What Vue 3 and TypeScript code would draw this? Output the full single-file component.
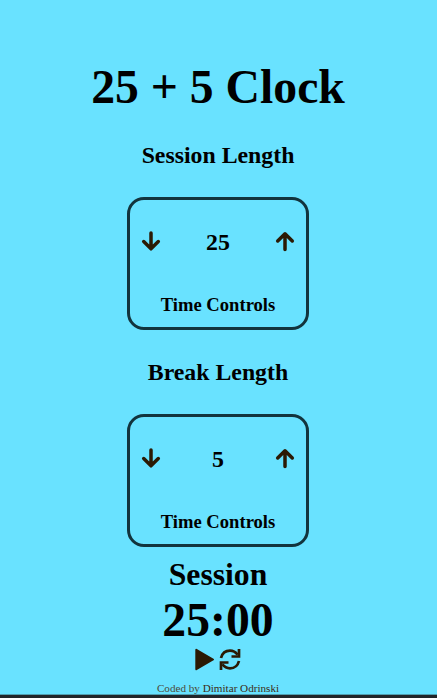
<script setup lang="ts">
import { ref } from 'vue'

interface Control {
  id: string
  title: string
  value: number
}

const controls = ref<Control[]>([
  { id: 'session', title: 'Session Length', value: 25 },
  { id: 'break', title: 'Break Length', value: 5 },
])

function change(control: Control, delta: number) {
  control.value = Math.min(60, Math.max(1, control.value + delta))
}
</script>

<template>
  <main class="clock">
    <h1 class="heading">25 + 5 Clock</h1>
    <section v-for="c in controls" :key="c.id" class="group">
      <h2 class="title">{{ c.title }}</h2>
      <div class="box">
        <div class="row">
          <button class="btn" :aria-label="'Decrease ' + c.id" @click="change(c, -1)">
            <svg class="arrow" viewBox="0 0 20 24"><path d="M10 3V18.500M2.700 11.600L10 18.800L17.300 11.600" /></svg>
          </button>
          <span class="value">{{ c.value }}</span>
          <button class="btn" :aria-label="'Increase ' + c.id" @click="change(c, 1)">
            <svg class="arrow" viewBox="0 0 20 24"><path d="M10 19.500V4M2.700 11L10 3.800L17.300 11" /></svg>
          </button>
        </div>
        <h3 class="caption">Time Controls</h3>
      </div>
    </section>
    <div class="phase">Session</div>
    <div class="time">25:00</div>
    <div class="actions">
      <button class="btn" aria-label="Start">
        <svg class="play" viewBox="0 0 20 24"><path d="M1.300 2.800L18 12.500L1.300 22.200Z" /></svg>
      </button>
      <button class="btn" aria-label="Reset">
        <svg class="sync" viewBox="0 0 24 24">
          <path class="arc" d="M3 11C4.200 6.500 7.700 3.700 12 3.700C15.300 3.700 17.700 5.200 19.600 7.700M21 14C19.800 18.500 16.300 21.300 12 21.300C8.700 21.300 6.300 19.800 4.400 17.300" />
          <path class="arc" d="M21 2V9.500H13.500M3 23V15.500H10.500" />
        </svg>
      </button>
    </div>
    <footer class="credit">Coded by <span class="author">Dimitar Odrinski</span></footer>
  </main>
</template>

<style>
body {
  background: #69e2ff;
}
</style>

<style scoped>
.clock {
  box-sizing: border-box;
  height: 698px;
  padding: 59px 1px 0 0;
  border-bottom: 3px solid #212529;
  box-shadow: inset 0 -1px 0 #4f9fb1;
  overflow: hidden;
  display: flex;
  flex-direction: column;
  align-items: center;
  font-family: "Liberation Serif", "Times New Roman", serif;
  font-weight: bold;
  color: #000;
}
.heading {
  margin: 0 0 28px;
  font-size: 47.700px;
  line-height: 55px;
}
.group {
  display: flex;
  flex-direction: column;
  align-items: center;
  height: 217px;
}
.title {
  margin: 0;
  font-size: 23.800px;
  line-height: 27px;
}
.box {
  box-sizing: border-box;
  width: 182px;
  height: 133px;
  margin-top: 28px;
  padding: 28px 11px 0;
  border: 3px solid #12343d;
  border-radius: 17px;
}
.row {
  display: flex;
  align-items: center;
  justify-content: space-between;
  height: 28px;
}
.value {
  font-size: 23.800px;
}
.caption {
  margin: 38px 0 0;
  font-size: 18.600px;
  line-height: 21px;
  text-align: center;
}
.btn {
  display: block;
  margin: 0;
  padding: 0;
  border: 0;
  background: none;
  color: #2b1a04;
}
.btn svg {
  display: block;
  fill: currentColor;
}
.btn .arrow {
  width: 20px;
  height: 24px;
  fill: none;
  stroke: currentColor;
  stroke-width: 3.500;
  stroke-linecap: round;
  stroke-linejoin: round;
}
.phase {
  margin-top: -19px;
  font-size: 31.700px;
  line-height: 36px;
}
.time {
  margin-top: -1px;
  font-size: 47.700px;
  line-height: 55px;
}
.actions {
  display: flex;
  gap: 3px;
}
.play {
  width: 20px;
  height: 24px;
  stroke: currentColor;
  stroke-width: 2;
  stroke-linejoin: round;
}
.sync {
  width: 24px;
  height: 24px;
}
.sync .arc {
  fill: none;
  stroke: currentColor;
  stroke-width: 2.700;
}
.credit {
  margin-top: 10px;
  font-size: 11.150px;
  line-height: 14px;
  font-weight: normal;
  color: #4c4a38;
}
.author {
  color: #3c2c14;
}
</style>
